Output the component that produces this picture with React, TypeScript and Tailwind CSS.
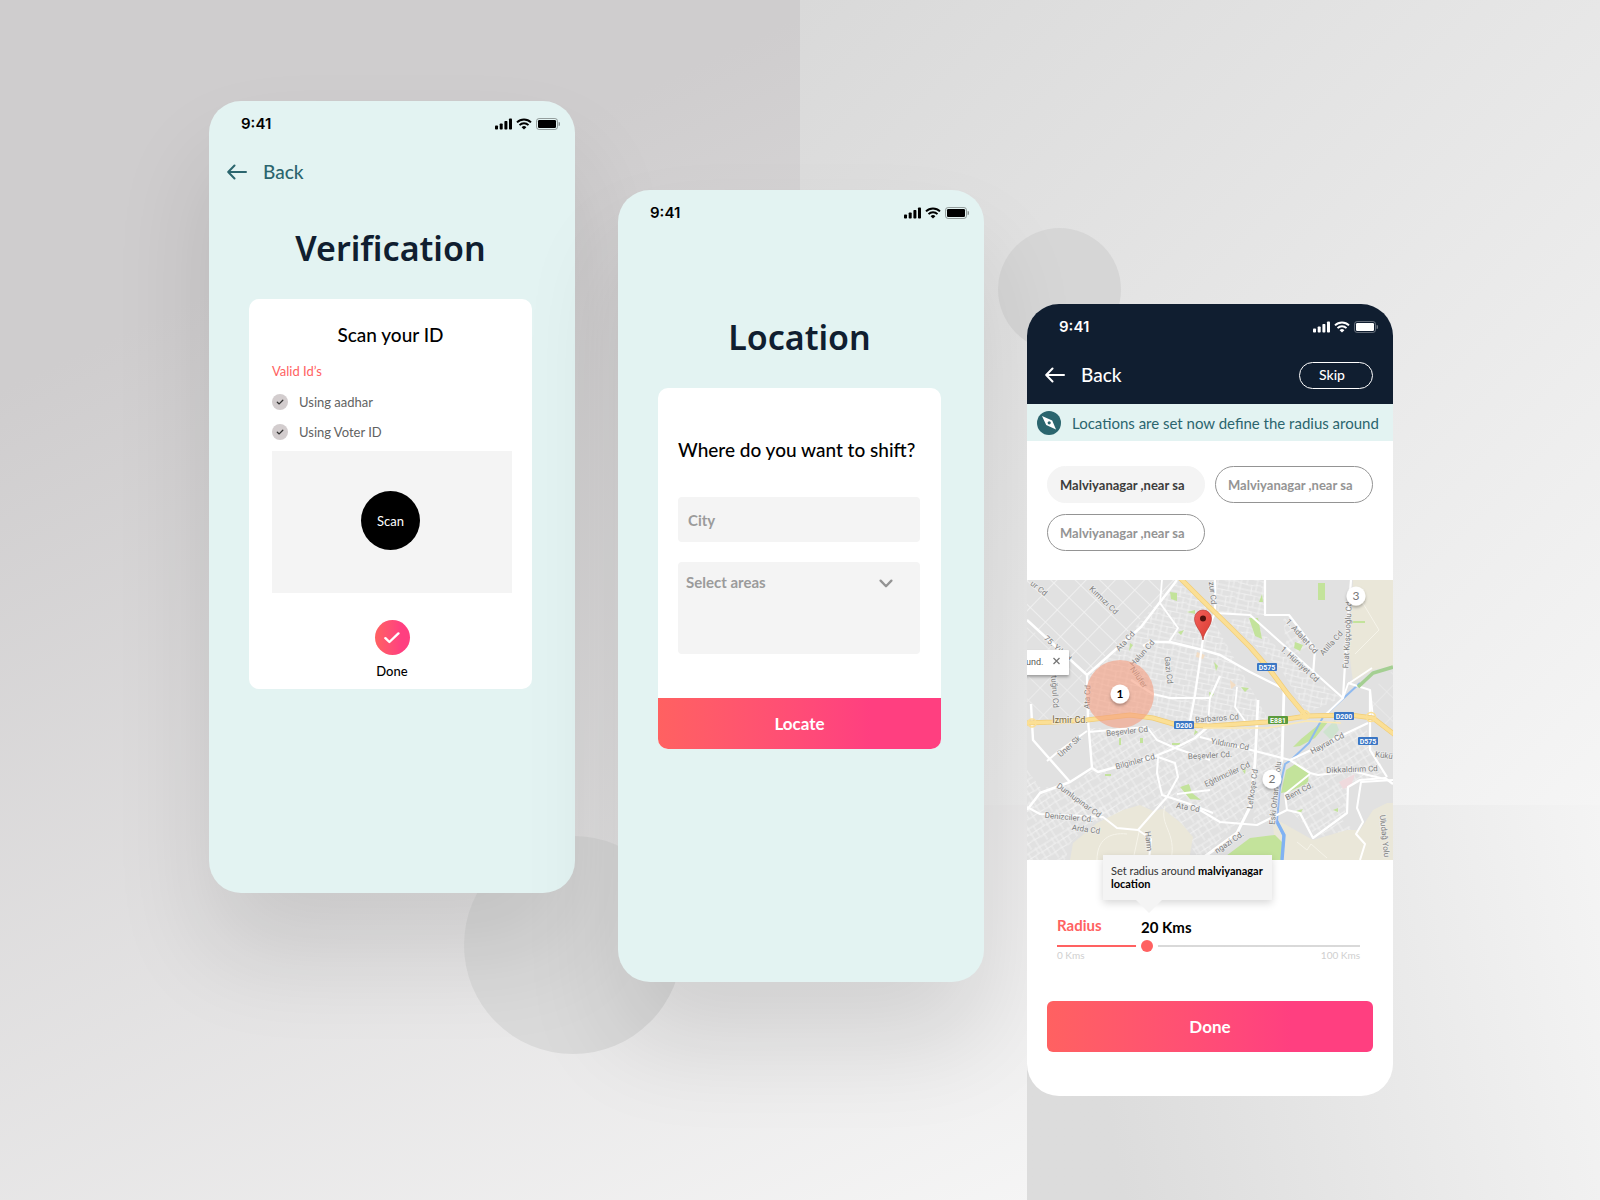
import type { ReactNode } from "react";

function StatusBar() {
  return (
    <div className="flex h-[46px] items-center justify-between pr-[15px] pl-8">
      <span className="font-['Inter',sans-serif] text-[15px] leading-5 font-semibold">9:41</span>
      <div className="flex items-center gap-1" aria-hidden="true">
        <svg width="17" height="12" viewBox="0 0 17 12" fill="currentColor">
          <rect x="0" y="7.5" width="3" height="4" rx="0.8" />
          <rect x="4.7" y="5.5" width="3" height="6" rx="0.8" />
          <rect x="9.4" y="3" width="3" height="8.5" rx="0.8" />
          <rect x="14" y="0.5" width="3" height="11" rx="0.8" />
        </svg>
        <svg width="16" height="12" viewBox="0 0 16 12" fill="none" stroke="currentColor" strokeWidth="2">
          <path d="M1 4.4a10 10 0 0 1 14 0" />
          <path d="M3.5 7.1a6.4 6.4 0 0 1 9 0" />
          <path d="M8 11.6 5.6 9.2a3.4 3.4 0 0 1 4.8 0Z" fill="currentColor" stroke="none" />
        </svg>
        <svg width="24" height="12" viewBox="0 0 24 12">
          <rect x="0.5" y="0.5" width="21" height="11" rx="2.6" fill="none" stroke="currentColor" strokeOpacity="0.35" />
          <rect x="2" y="2" width="18" height="8" rx="1.3" fill="currentColor" />
          <path d="M22.6 4v4a2 2 0 0 0 0-4Z" fill="currentColor" fillOpacity="0.4" />
        </svg>
      </div>
    </div>
  );
}

function BackButton() {
  return (
    <button type="button" className="flex items-center gap-4 text-[19px] leading-6 font-medium">
      <svg width="20" height="16" viewBox="0 0 20 16" fill="none" stroke="currentColor" strokeWidth="2" strokeLinecap="round" strokeLinejoin="round" aria-hidden="true">
        <path d="M19 8H1.5M7.5 1.5 1.2 8l6.3 6.5" />
      </svg>
      Back
    </button>
  );
}

function Phone({ label, className, children }: { label: string; className: string; children: ReactNode }) {
  return (
    <section aria-label={label} className={`flex min-h-[792px] min-w-0 flex-col overflow-hidden rounded-[32px] ${className}`}>
      {children}
    </section>
  );
}

function IdOption({ children }: { children: ReactNode }) {
  return (
    <label className="flex h-[30px] items-center gap-[11px] text-[13px] leading-4 text-[#626262]">
      <span className="grid size-4 place-items-center">
        <input type="checkbox" defaultChecked className="col-start-1 row-start-1 size-4 appearance-none rounded-full bg-[#d3cdce]" />
        <svg className="pointer-events-none col-start-1 row-start-1" width="8" height="8" viewBox="0 0 8 8" fill="none" stroke="#333" strokeWidth="1.3" strokeLinecap="round" strokeLinejoin="round" aria-hidden="true">
          <path d="M1.3 4.2 3.2 5.9 6.8 2.3" />
        </svg>
      </span>
      {children}
    </label>
  );
}

function Verification() {
  return (
    <Phone label="Verification" className="mt-[101px] bg-[#e3f3f2] text-black shadow-[0_60px_100px_rgba(0,0,0,0.11)]">
      <StatusBar />
      <div className="flex h-[50px] items-center pl-[18px] text-[#2b656e]">
        <BackButton />
      </div>
      <h1 className="mt-[27px] pr-[3px] text-center font-['Noto_Sans',sans-serif] text-[34px] leading-[48px] font-semibold text-[#101e30]">Verification</h1>
      <div className="mt-[27px] mr-[43px] ml-10 rounded-[10px] bg-white pr-5 pb-[10px] pl-[23px]">
        <h2 className="pt-6 pr-[3px] text-center text-[19px] leading-6 font-medium">Scan your ID</h2>
        <p className="mt-4 text-[13px] leading-4 text-[#ff6161]">Valid Id&rsquo;s</p>
        <div className="mt-2">
          <IdOption>Using aadhar</IdOption>
          <IdOption>Using Voter ID</IdOption>
        </div>
        <div className="mt-1 flex h-[142px] items-center justify-center bg-[#f4f4f4] pr-[3px] pb-[3px]">
          <button type="button" className="size-[59px] rounded-full bg-black text-[13px] leading-4 text-white">Scan</button>
        </div>
        <button type="button" className="mx-auto mt-[27px] flex flex-col items-center gap-2 text-[13px] leading-4 font-medium">
          <span className="flex size-[35px] items-center justify-center rounded-full bg-linear-to-r from-[#ff6161] to-[#ff3f80] to-75%">
            <svg width="16" height="12" viewBox="0 0 16 12" fill="none" stroke="#fff" strokeWidth="2.4" strokeLinecap="round" strokeLinejoin="round" aria-hidden="true">
              <path d="M1.4 6.2 5.4 10 14.4 1.4" />
            </svg>
          </span>
          Done
        </button>
      </div>
    </Phone>
  );
}

function Location() {
  return (
    <Phone label="Location" className="mt-[190px] bg-[#e3f3f2] text-black shadow-[0_60px_100px_rgba(0,0,0,0.11)]">
      <StatusBar />
      <h1 className="mt-[77px] pr-[3px] text-center font-['Noto_Sans',sans-serif] text-[34px] leading-[48px] font-semibold text-[#101e30]">Location</h1>
      <form className="mt-[27px] mr-[43px] ml-10 overflow-hidden rounded-[10px] bg-white">
        <div className="flex flex-col gap-5 pr-[21px] pb-[44px] pl-5">
          <h2 className="pt-[50px] pb-[15px] text-[19px] leading-6 font-medium whitespace-nowrap">Where do you want to shift?</h2>
          <input aria-label="City" placeholder="City" className="h-[45px] w-full rounded bg-[#f4f4f4] px-[10px] text-[15px] leading-5 font-bold outline-none placeholder:text-[#9b9b9b]" />
          <div className="relative">
            <select aria-label="Select areas" className="h-[92px] w-full appearance-none rounded bg-[#f4f4f4] px-2 pb-[52px] text-[15px] leading-5 font-bold text-[#9b9b9b] outline-none">
              <option>Select areas</option>
            </select>
            <svg className="pointer-events-none absolute top-[17px] right-[27px]" width="14" height="9" viewBox="0 0 14 9" fill="none" stroke="#949494" strokeWidth="2.3" strokeLinecap="round" strokeLinejoin="round" aria-hidden="true">
              <path d="M1.6 1.6 7 7.2l5.4-5.6" />
            </svg>
          </div>
        </div>
        <button type="button" className="block h-[51px] w-full bg-linear-to-r from-[#ff6161] to-[#ff3f80] to-75% text-[17px] leading-5 font-bold text-white">Locate</button>
      </form>
    </Phone>
  );
}

function Chip({ selected = false }: { selected?: boolean }) {
  return (
    <button
      type="button"
      aria-pressed={selected}
      className={`h-[37px] rounded-full border px-3 text-left text-[13px] leading-4 font-bold whitespace-nowrap ${
        selected ? "border-[#f4f4f4] bg-[#f4f4f4] text-[#3c3c3c]" : "border-[#949494] bg-white text-[#949494]"
      }`}
    >
      Malviyanagar ,near sa
    </button>
  );
}

type Street = [string, number, number, number];

const streets: Street[] = [
  ["ur Cd", 12, 8, 38],
  ["Kırmızı Cd", 77, 20, 44],
  ["Ata Cd", 98, 61, -48],
  ["75. Yıl Cd", 31, 68, 42],
  ["Halun Cd", 115, 73, -48],
  ["Nilüfer", 112, 97, 55],
  ["Gazi Cd", 142, 90, 84],
  ["Ata Cd", 60, 117, -88],
  ["Ertuğrul Cd", 28, 108, 86],
  ["Üner Sk", 42, 166, -42],
  ["Beşevler Cd", 100, 151, -6],
  ["Bilginler Cd.", 109, 181, -15],
  ["Dumlupınar Cd", 52, 220, 36],
  ["Denizciler Cd.", 42, 237, 5],
  ["Arda Cd", 59, 249, 8],
  ["Ata Cd", 161, 227, 10],
  ["Harm", 122, 261, 84],
  ["Barbaros Cd", 190, 138, -4],
  ["Beşevler Cd.", 183, 175, -3],
  ["Yıldırım Cd", 203, 164, 10],
  ["Eğitimciler Cd", 200, 194, -25],
  ["Lefkoşe Cd", 225, 209, -82],
  ["Eski Orhaneli Yolu", 248, 213, -84],
  ["Bent Cd.", 272, 211, -27],
  ["Dikkaldırım Cd", 325, 189, -2],
  ["Hayran Cd", 300, 163, -28],
  ["Kükü", 357, 175, 8],
  ["Uludağ Yolu", 358, 256, 84],
  ["ngazi Cd.", 202, 262, -34],
  ["zur Cd", 186, 13, 84],
  ["1. Adalet Cd", 275, 56, 48],
  ["1. Hürriyet Cd", 273, 84, 42],
  ["Atilla Cd", 304, 63, -48],
  ["Fuat Kuşçuoğlu Cd", 320, 55, -87],
];

const shields: [string, number, number, string][] = [
  ["D575", 240, 87, "#3a76c4"],
  ["D200", 157, 145, "#3a76c4"],
  ["E881", 251, 140, "#5b9a3c"],
  ["D200", 317, 136, "#3a76c4"],
  ["D575", 341, 161, "#3a76c4"],
];

function CityMap() {
  return (
    <svg className="block h-[280px] w-full" viewBox="0 0 366 280" preserveAspectRatio="xMidYMid slice" role="img" aria-label="City map with three pinned locations">
      <defs>
        <pattern id="blocks-wide" width="21" height="17" patternUnits="userSpaceOnUse" patternTransform="rotate(44)">
          <path d="M0 0H21M0 0V17" stroke="#f3f3f3" strokeWidth="1.6" fill="none" />
        </pattern>
        <pattern id="blocks-a" width="23" height="16" patternUnits="userSpaceOnUse" patternTransform="rotate(12)">
          <path d="M0 1 23 0M0 6l12 1 11-2M0 12h23M3 0v16M9 0v7M14 6l1 10M19 0v12" stroke="#f2f2f2" strokeWidth="0.9" fill="none" />
        </pattern>
        <pattern id="blocks-b" width="19" height="21" patternUnits="userSpaceOnUse" patternTransform="rotate(-32)">
          <path d="M0 2h19M0 8l19-1M0 14l10 1 9-1M2 0v21M8 2v12M13 8v13M17 0v8" stroke="#f2f2f2" strokeWidth="0.9" fill="none" />
        </pattern>
        <linearGradient id="pin" x1="0" x2="1" y1="0" y2="1">
          <stop offset="0" stopColor="#f2605a" />
          <stop offset="1" stopColor="#d93a30" />
        </linearGradient>
        <filter id="lift" x="-40%" y="-40%" width="180%" height="180%">
          <feDropShadow dx="0" dy="2" stdDeviation="1.6" floodOpacity="0.3" />
        </filter>
      </defs>

      <rect width="366" height="280" fill="#e1e1e1" />

      <path d="M0 0h150L60 95 0 40Z" fill="url(#blocks-wide)" />
      <path d="M0 45 58 98l4 40-56 2-6-10Z" fill="url(#blocks-wide)" opacity="0.7" />
      <path d="M150 2 62 96v44l64-4 58 10 58-5-68-123Z" fill="url(#blocks-a)" />
      <path d="M66 188 61 148l120 0 50 0-6 80-52 52-20-30-20-25-70 18-18-10-4-20Z" fill="url(#blocks-b)" />
      <path d="m0 190 14 18 28-4 14 16 40 12-30 10-22 20-6 18H0Z" fill="url(#blocks-b)" />
      <path d="m188 0 50 0 0 35-15 0-35-3ZM200 40l22-2 40 42 52 38-34 15-27-45Z" fill="url(#blocks-a)" />
      <path d="M256 36l30 34-26 8ZM232 148l24 0-6 82-24 14ZM262 180l76-34 20 48-36 12-4 28-30 20-28-26 18-34Z" fill="url(#blocks-b)" />
      <path d="M343 112l23-22v60l-20-12Z" fill="url(#blocks-wide)" opacity="0.5" />
      <path d="M292 255l22-16 12 10-12 12Z" fill="url(#blocks-b)" />

      <g fill="#eae7d9">
        <path d="M326 0h40v86l-20 4-20 12-4-30Z" />
        <path d="m43 280 3-17 24-20 26-13 17-5 13 6 10-2 18 14 12 14-4 23Z" />
        <path d="m245 237 41 23 34-10 13 0 13-20 14-7h6v57H250Z" />
      </g>
      <g fill="none" stroke="#f6f4ea" strokeWidth="1">
        <path d="M70 280c0-20 12-28 30-26M112 252l-6 28M138 226c-6 20 12 26 6 54M270 262l10 8 4-6 16 14M334 20l18 30-24 24" />
      </g>

      <g fill="#c3e39b">
        <path d="m203 273 20-15 25-3 8 8v17h-63Z" />
        <path d="m254 213 5-23 11-7 12 9-1 11-17 8Z" />
        <path d="m266 167 8-8 22-18 5 1-13 16-15 8Z" />
        <path d="M291 3h7v17h-7ZM143 12l7 1v8l-6-2ZM222 38l9 0 4 21-7-3ZM153 207l9-3 3 9 9 7-11-1ZM160 32l8-2v4ZM268 62l8 3-3 6-6-3ZM214 107l8 1-4 4ZM269 231l7-2-3 5ZM326 41h12v2h-12ZM235 14l-3 8h4ZM182 112l5 2-4 5ZM92 158h2v7h-2ZM113 158h3v5h-3ZM145 163h8v2h-8ZM151 52l6-2-3 5ZM215 190l4-2-1 6ZM306 230l5-2v4ZM78 194h6v2h-6ZM187 82l4 4-2 5ZM103 63l3 2-4 6ZM168 150l3 2-4 3Z" />
      </g>
      <path d="m296 152 12-12 4 10-8 10Z" fill="#cfe3cf" />
      <path d="m312 202 16-8-4 12-8 3Z" fill="#efdadd" />
      <path d="m170 72 8 3-2 4-7-2ZM203 100l6 5-5 4Z" fill="#f3ddc4" />

      <path d="M333 103 296 137l-14 26-18 17-6 4-5 22-3 35 7 16-2 23" fill="none" stroke="#8fbaf0" strokeWidth="2" />
      <path d="m249 240 8 15-2 25" fill="none" stroke="#80b2f3" strokeWidth="3.4" />

      <g fill="none" stroke="#fff" strokeWidth="2.4" strokeLinejoin="round">
        <path d="m0 40 60 55M150 0l-36 47-54 48 1 45 4 48" />
        <path d="m135 0-2 23 18 25-9 14" strokeWidth="1.8" />
        <path d="m116 66 7-4h20l33 8 17 5 30 17 30 15 6 3" />
        <path d="M188 0v33l-12 26-8 56-5 26M188 33l35 2 93 83M238 0v35h24l26 34-2 26" strokeWidth="2.2" />
        <path d="m104 100 22 14 17 4h40l10-22M324 0l-4 50-4 68-20 19" strokeWidth="2.2" />
        <path d="M4 124l2 36 37 42M0 230l13-17 30-11 22-14 6 4 55-15 22-9 20-10 15-13" />
        <path d="M61 152l59-5 10 13 18 8 35 12M20 181l12-10 28-20" strokeWidth="2" />
        <path d="m0 227 13 7 63 3 14 11 21 2 29-33 11-20-3-14-17-6-1 16 5 22 25 8 26 10M111 250l13 9-2 21" strokeWidth="2" />
        <path d="m231 120-3 63-5 44-13 26-37 27M257 110l-2 70-6 20" strokeWidth="2.8" />
        <path d="m173 157 90 23 20 13 8 2 34-4 20 5 13 3M263 180l78-37M173 230l20 12 37 3 30-15 13 3 13 25 34-25 1-26 12-7 25-2 8 6M343 110l0 60 17 27" strokeWidth="2.2" />
        <path d="m260 230-2-16 25-20M321 103l22 7 3 28M366 200l-32 2-4 26 6 14-7 12 9 10-5 16" strokeWidth="2" />
        <path d="M210 107l-2 20 10 14M183 117l-2 28M150 214l33-4M345 88l-24 16-5 14" strokeWidth="1.8" />
      </g>
      <path d="m331 107 15-14 20-6" fill="none" stroke="#a4cf92" strokeWidth="3.6" />

      <g fill="none" strokeLinejoin="round">
        <path d="m153-2 20 20 30 29 20 20 20 23 17 23 19 23M-2 143l28-1 34-2 43-5 23 3 24 7 33 1 57-4 40-6 43-1 23 3 22 17" stroke="#f1cd77" strokeWidth="5" />
        <path d="m153-2 20 20 30 29 20 20 20 23 17 23 19 23M-2 143l28-1 34-2 43-5 23 3 24 7 33 1 57-4 40-6 43-1 23 3 22 17" stroke="#fbdf95" strokeWidth="3.6" />
        <path d="M176 148h64l40-7 34 2" stroke="#fbe9b5" strokeWidth="1.6" />
      </g>
      <circle cx="5" cy="143" r="4" fill="none" stroke="#fbdf95" strokeWidth="1.6" />
      <circle cx="278" cy="135" r="4" fill="none" stroke="#fbdf95" strokeWidth="2" />
      <circle cx="344" cy="137" r="4.5" fill="none" stroke="#fbdf95" strokeWidth="1.6" />

      <g fontFamily="Roboto, sans-serif" fontSize="8" fill="#808080" stroke="#f0f0f0" strokeWidth="1.6" strokeOpacity="0.7" paintOrder="stroke" textAnchor="middle">
        {streets.map(([name, x, y, angle]) => (
          <text key={`${name}-${x}`} transform={`translate(${x} ${y}) rotate(${angle})`} dy="3">
            {name}
          </text>
        ))}
        <text x="43" y="143" fontSize="9" fill="#7b6a3f">İzmir Cd.</text>
      </g>

      <g fontFamily="Roboto, sans-serif" fontSize="7" fontWeight="700" fill="#fff" textAnchor="middle">
        {shields.map(([name, x, y, color]) => (
          <g key={`${name}-${x}`}>
            <rect x={x - 10} y={y - 4} width="20" height="8" rx="1" fill={color} />
            <text x={x} y={y + 3}>{name}</text>
          </g>
        ))}
      </g>

      <circle cx="93" cy="114" r="34" fill="#f59c7e" fillOpacity="0.6" />

      <path d="M176 60c-1-9-8.5-13-8.5-21.5a8.5 8.5 0 0 1 17 0C184.5 47 177 51 176 60Z" fill="url(#pin)" stroke="#b5332c" strokeWidth="0.6" />
      <circle cx="176" cy="38.5" r="3" fill="#4f110d" />

      <g filter="url(#lift)">
        <rect x="-6" y="70" width="48" height="25" rx="1" fill="#fff" />
      </g>
      <text x="-1" y="85" fontFamily="Roboto, sans-serif" fontSize="9" fill="#555">und.</text>
      <path d="m26.5 78 6 6m0-6-6 6" stroke="#777" strokeWidth="1.3" />

      <g filter="url(#lift)" fill="#fff">
        <circle cx="93" cy="114" r="9.5" />
        <circle cx="245" cy="199" r="9.5" />
        <circle cx="329" cy="16" r="9.5" />
      </g>
      <g fontFamily="Lato, sans-serif" fontSize="12" textAnchor="middle" fill="#777">
        <text x="93" y="118" fontWeight="700" fill="#000">1</text>
        <text x="245" y="203">2</text>
        <text x="329" y="20">3</text>
      </g>
    </svg>
  );
}

function RadiusScreen() {
  return (
    <Phone label="Set radius" className="mt-[304px] bg-white text-black">
      <header className="bg-[#101e30] pb-1 text-white">
        <StatusBar />
        <div className="flex h-[50px] items-center justify-between pr-5 pl-[18px]">
          <BackButton />
          <button type="button" className="h-[27px] w-[74px] rounded-full border border-white pr-2 text-sm leading-5 font-medium">Skip</button>
        </div>
      </header>
      <div className="flex h-[37px] items-center gap-[11px] bg-[#e3f3f2] pl-[10px] text-[15px] leading-5 whitespace-nowrap text-[#2b656e]">
        <svg width="24" height="24" viewBox="0 0 24 24" className="shrink-0" aria-hidden="true">
          <circle cx="12" cy="12" r="12" fill="#2b656e" />
          <path d="m5 5 10.2 4.6L19 18.5 9.2 14Z" fill="#fff" />
          <circle cx="12.2" cy="11.8" r="1.6" fill="#2b656e" />
        </svg>
        Locations are set now define the radius around
      </div>
      <div className="grid grid-cols-2 gap-x-[10px] gap-y-[11px] px-5 pt-[25px] pb-[29px]">
        <Chip selected />
        <Chip />
        <Chip />
      </div>
      <div className="relative">
        <CityMap />
        <div role="tooltip" className="absolute top-[275px] left-[76px] w-[169px] bg-[#f4f4f4] px-2 pt-[9px] pb-[10px] text-[11px] leading-[13px] text-[#333] shadow-[0_3px_8px_rgba(0,0,0,0.16)]">
          Set radius around <strong className="text-black">malviyanagar location</strong>
          <svg className="absolute top-full left-[33px]" width="26" height="13" viewBox="0 0 26 13" aria-hidden="true">
            <path d="M0 0h26L13 13Z" fill="#f4f4f4" />
          </svg>
        </div>
      </div>
      <div className="pt-[55px] pr-[33px] pl-[30px]">
        <div className="flex items-end text-[15px] leading-5 font-bold">
          <label htmlFor="radius" className="w-[84px] pb-[2px] text-[#ff6161]">Radius</label>
          <output htmlFor="radius">20 Kms</output>
        </div>
        <input
          id="radius"
          type="range"
          min="0"
          max="100"
          defaultValue="29"
          className="mt-[3px] block h-3 w-full appearance-none bg-transparent [&::-webkit-slider-runnable-track]:h-[2px] [&::-webkit-slider-runnable-track]:bg-linear-to-r [&::-webkit-slider-runnable-track]:from-[#ff6161] [&::-webkit-slider-runnable-track]:from-30% [&::-webkit-slider-runnable-track]:to-[#d9d9d9] [&::-webkit-slider-runnable-track]:to-30% [&::-webkit-slider-thumb]:-mt-[5px] [&::-webkit-slider-thumb]:size-3 [&::-webkit-slider-thumb]:appearance-none [&::-webkit-slider-thumb]:rounded-full [&::-webkit-slider-thumb]:bg-[#ff6161] [&::-webkit-slider-thumb]:shadow-[0_0_0_5px_#fff]"
        />
        <div className="-mt-[3px] flex justify-between text-[10px] leading-3 text-[#cfcfcf]">
          <span>0 Kms</span>
          <span>100 Kms</span>
        </div>
      </div>
      <div className="px-5 pt-10">
        <button type="button" className="h-[51px] w-full rounded-md bg-linear-to-r from-[#ff6161] to-[#ff3f80] to-75% text-[17px] leading-5 font-bold text-white">Done</button>
      </div>
    </Phone>
  );
}

export default function App() {
  return (
    <main className="relative isolate flex min-h-screen justify-center overflow-hidden bg-linear-155 from-[#cfcdce] from-20% to-[#f7f7f7] to-90% pb-[103px] pl-[2px] font-['Lato',sans-serif]">
      <div className="absolute top-0 right-0 -z-10 h-[805px] w-1/2 bg-linear-135 from-[#d9d9d9] to-[#f5f5f5]" />
      <div className="absolute right-0 bottom-0 -z-10 h-[395px] w-[573px] bg-linear-80 from-[#dcdcdc] from-15% to-[#f4f4f4]" />
      <div className="absolute top-[228px] left-[998px] -z-10 size-[123px] rounded-full bg-[#d6d6d6]" />
      <div className="absolute top-[836px] left-[464px] -z-10 size-[218px] rounded-full bg-[#dadada]" />
      <div className="grid w-full max-w-[1184px] grid-cols-3 items-start gap-[43px]">
        <Verification />
        <Location />
        <RadiusScreen />
      </div>
    </main>
  );
}
